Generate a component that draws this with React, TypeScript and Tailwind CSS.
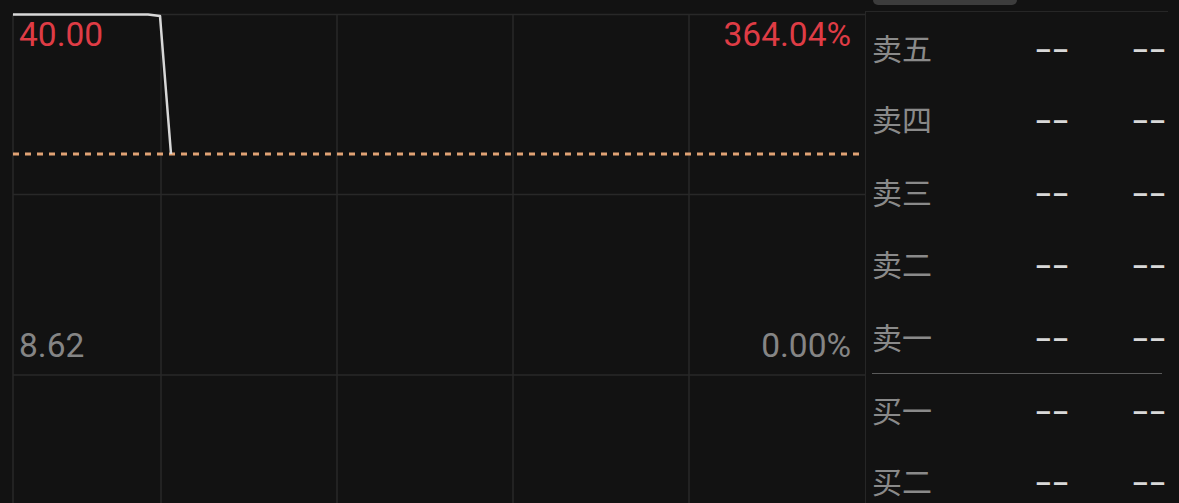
const FONT = { fontFamily: "Roboto, 'Noto Sans CJK SC', sans-serif" }

const sellRows = [
  { label: "卖五", h: "h-[70px]" },
  { label: "卖四", h: "h-[72.5px]" },
  { label: "卖三", h: "h-[72.5px]" },
  { label: "卖二", h: "h-[72.5px]" },
  { label: "卖一", h: "h-[72.5px]" },
]
const buyRows = [
  { label: "买一", h: "h-[69px]" },
  { label: "买二", h: "h-[74px]" },
]

function Dash() {
  return <span className="inline-block origin-right scale-x-[1.7] text-[30px] font-medium leading-none text-[#d8d8d8]">--</span>
}

function DepthRow({ label, h }: { label: string; h: string }) {
  return (
    <div className={`flex shrink-0 items-center ${h}`}>
      <span className="w-[60px] text-[30px] leading-none text-[#8a8a8a]" style={{ fontFamily: "'Noto Sans CJK SC', sans-serif" }}>
        {label}
      </span>
      <span className="ml-auto mr-[76px] mt-[8px]"><Dash /></span>
      <span className="mr-[2px] mt-[8px]"><Dash /></span>
    </div>
  )
}

function Chart() {
  const vx = [13, 161, 337, 513, 689]
  const hy = [14.5, 194.5, 375]
  return (
    <div className="relative h-full w-[865px]">
      <svg width="865" height="503" className="absolute inset-0">
        {vx.map((x) => (
          <line key={x} x1={x} y1={14} x2={x} y2={503} stroke="#282828" strokeWidth={1.5} />
        ))}
        {hy.map((y) => (
          <line key={y} x1={13} y1={y} x2={865} y2={y} stroke="#282828" strokeWidth={1.5} />
        ))}
        <line x1={13} y1={154} x2={865} y2={154} stroke="#e0a274" strokeWidth={3} strokeDasharray="6 6" />
        <polyline
          points="13,14.5 148,14.5 160,16 171,154"
          fill="none"
          stroke="#d8d8d8"
          strokeWidth={2.5}
          strokeLinejoin="round"
        />
      </svg>
      <span className="absolute left-[19px] top-[18px] text-[33.5px] leading-none text-[#df3c45]">40.00</span>
      <span className="absolute right-[14px] top-[18px] text-[33.5px] leading-none text-[#df3c45]">364.04%</span>
      <span className="absolute left-[19px] top-[329px] text-[33.5px] leading-none text-[#858585]">8.62</span>
      <span className="absolute right-[14px] top-[329px] text-[33.5px] leading-none text-[#858585]">0.00%</span>
    </div>
  )
}

export default function App() {
  return (
    <div className="flex h-[503px] w-[1179px] overflow-hidden bg-[#121212]" style={FONT}>
      <Chart />
      <div className="relative flex w-[303px] flex-col">
        <div className="absolute left-[8px] top-0 h-[5px] w-[144px] rounded-b-md bg-[#3c3c3c]" />
        <div className="mt-[11px] flex flex-1 flex-col border-l-[1.5px] border-t-[1.5px] border-[#262626] pl-[6px]">
          {sellRows.map((r) => (
            <DepthRow key={r.label} label={r.label} h={r.h} />
          ))}
          <div className="mr-[6px] mt-[1px] shrink-0 border-t border-[#5a5a5a]" />
          {buyRows.map((r) => (
            <DepthRow key={r.label} label={r.label} h={r.h} />
          ))}
        </div>
      </div>
    </div>
  )
}
